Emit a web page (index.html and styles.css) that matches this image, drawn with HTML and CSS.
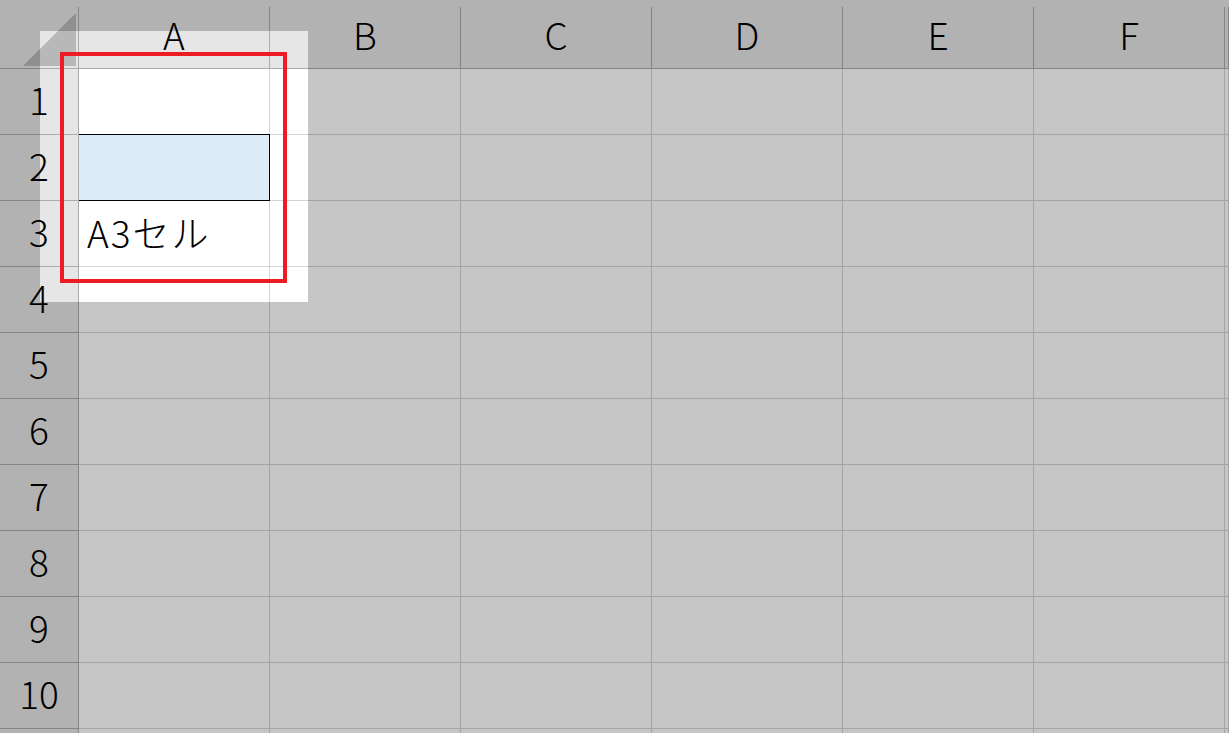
FILE: index.html
```html
<!DOCTYPE html>
<html lang="ja">
<head>
<meta charset="utf-8">
<title>Sheet</title>
<link rel="stylesheet" href="styles.css">
</head>
<body>
<div class="stage">
  <div class="sheet">
    <div class="corner"><div class="tri"></div></div>
    <div class="colhead">A</div>
    <div class="colhead">B</div>
    <div class="colhead">C</div>
    <div class="colhead">D</div>
    <div class="colhead">E</div>
    <div class="colhead">F</div>
    <div class="colhead"></div>

    <div class="rowhead">1</div>
    <div class="cell"></div><div class="cell"></div><div class="cell"></div><div class="cell"></div><div class="cell"></div><div class="cell"></div><div class="cell"></div>
    <div class="rowhead">2</div>
    <div class="cell selected"></div><div class="cell"></div><div class="cell"></div><div class="cell"></div><div class="cell"></div><div class="cell"></div><div class="cell"></div>
    <div class="rowhead">3</div>
    <div class="cell text">A3セル</div><div class="cell"></div><div class="cell"></div><div class="cell"></div><div class="cell"></div><div class="cell"></div><div class="cell"></div>
    <div class="rowhead">4</div>
    <div class="cell"></div><div class="cell"></div><div class="cell"></div><div class="cell"></div><div class="cell"></div><div class="cell"></div><div class="cell"></div>
    <div class="rowhead">5</div>
    <div class="cell"></div><div class="cell"></div><div class="cell"></div><div class="cell"></div><div class="cell"></div><div class="cell"></div><div class="cell"></div>
    <div class="rowhead">6</div>
    <div class="cell"></div><div class="cell"></div><div class="cell"></div><div class="cell"></div><div class="cell"></div><div class="cell"></div><div class="cell"></div>
    <div class="rowhead">7</div>
    <div class="cell"></div><div class="cell"></div><div class="cell"></div><div class="cell"></div><div class="cell"></div><div class="cell"></div><div class="cell"></div>
    <div class="rowhead">8</div>
    <div class="cell"></div><div class="cell"></div><div class="cell"></div><div class="cell"></div><div class="cell"></div><div class="cell"></div><div class="cell"></div>
    <div class="rowhead">9</div>
    <div class="cell"></div><div class="cell"></div><div class="cell"></div><div class="cell"></div><div class="cell"></div><div class="cell"></div><div class="cell"></div>
    <div class="rowhead">10</div>
    <div class="cell"></div><div class="cell"></div><div class="cell"></div><div class="cell"></div><div class="cell"></div><div class="cell"></div><div class="cell"></div>
    <div class="rowhead"></div>
    <div class="cell"></div><div class="cell"></div><div class="cell"></div><div class="cell"></div><div class="cell"></div><div class="cell"></div><div class="cell"></div>
  </div>
  <div class="spotlight"></div>
  <div class="redbox"></div>
</div>
</body>
</html>
```
FILE: styles.css
```css
* { box-sizing: border-box; }
html, body {
  margin: 0;
  padding: 0;
  width: 1229px;
  height: 733px;
  overflow: hidden;
  background: #ffffff;
}
body {
  font-family: "Noto Sans CJK JP", "Noto Sans", sans-serif;
  font-weight: 300;
  color: #000;
}
.stage {
  position: relative;
  width: 1229px;
  height: 733px;
  overflow: hidden;
}
.sheet {
  display: grid;
  grid-template-columns: 79px repeat(6, 191px) 1fr;
  grid-template-rows: 69px repeat(10, 66px) 1fr;
  width: 1229px;
  height: 733px;
  background: #e6e6e6;
}
.corner {
  position: relative;
  margin-top: 7px;
  border-right: 1px solid #ababab;
  border-bottom: 1px solid #ababab;
  background: #e6e6e6;
}
.tri {
  position: absolute;
  right: 2px;
  bottom: 2px;
  width: 53px;
  height: 53px;
  background: #b8b8b8;
  clip-path: polygon(100% 0, 100% 100%, 0 100%);
}
.colhead {
  margin-top: 7px;
  border-right: 1px solid #ababab;
  border-bottom: 1px solid #ababab;
  background: #e6e6e6;
  display: flex;
  align-items: center;
  justify-content: center;
  font-size: 37px;
  line-height: 1;
  padding-bottom: 6px;
}
.rowhead {
  border-right: 1px solid #ababab;
  border-bottom: 1px solid #ababab;
  background: #e6e6e6;
  display: flex;
  align-items: center;
  justify-content: center;
  font-size: 37px;
  line-height: 1;
  padding-bottom: 5px;
}
.cell {
  border-right: 1px solid #d4d4d4;
  border-bottom: 1px solid #d4d4d4;
  background: #ffffff;
}
.cell.selected {
  background: #ddebf7;
  margin-top: -1px;
  border-top: 1px solid #000;
  border-right: 1px solid #000;
  border-bottom: 1px solid #000;
}
.cell.text {
  display: flex;
  align-items: center;
  padding-left: 8px;
  font-size: 37px;
  letter-spacing: 2px;
  line-height: 1;
  padding-bottom: 2px;
  white-space: nowrap;
}
.spotlight {
  position: absolute;
  left: 40px;
  top: 31px;
  width: 268px;
  height: 271px;
  box-shadow: 0 0 0 3000px rgba(0, 0, 0, 0.225);
}
.redbox {
  position: absolute;
  left: 60px;
  top: 52px;
  width: 227px;
  height: 231px;
  border: 4px solid #ed1c24;
}
```
